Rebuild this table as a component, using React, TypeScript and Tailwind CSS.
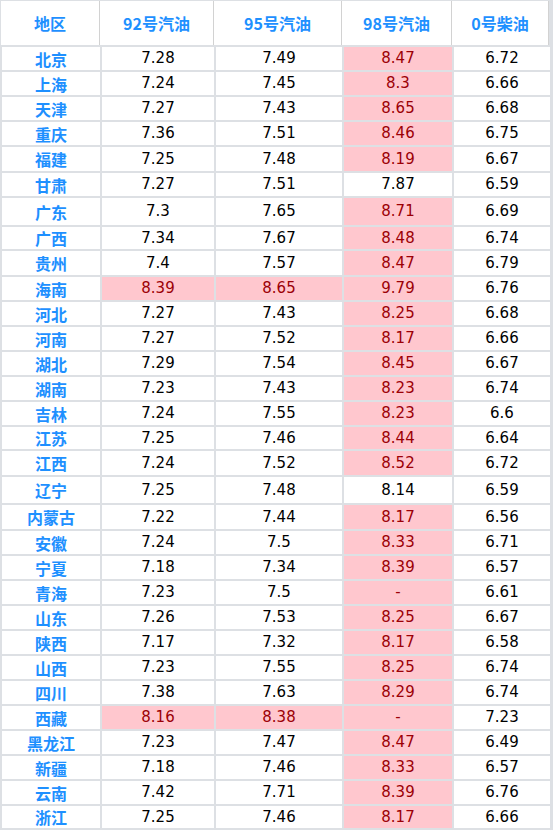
import React from "react";

type Row = [string, string, string, string, string, number[]];

const rows: Row[] = [
  ["北京", "7.28", "7.49", "8.47", "6.72", [2]],
  ["上海", "7.24", "7.45", "8.3", "6.66", [2]],
  ["天津", "7.27", "7.43", "8.65", "6.68", [2]],
  ["重庆", "7.36", "7.51", "8.46", "6.75", [2]],
  ["福建", "7.25", "7.48", "8.19", "6.67", [2]],
  ["甘肃", "7.27", "7.51", "7.87", "6.59", []],
  ["广东", "7.3", "7.65", "8.71", "6.69", [2]],
  ["广西", "7.34", "7.67", "8.48", "6.74", [2]],
  ["贵州", "7.4", "7.57", "8.47", "6.79", [2]],
  ["海南", "8.39", "8.65", "9.79", "6.76", [0, 1, 2]],
  ["河北", "7.27", "7.43", "8.25", "6.68", [2]],
  ["河南", "7.27", "7.52", "8.17", "6.66", [2]],
  ["湖北", "7.29", "7.54", "8.45", "6.67", [2]],
  ["湖南", "7.23", "7.43", "8.23", "6.74", [2]],
  ["吉林", "7.24", "7.55", "8.23", "6.6", [2]],
  ["江苏", "7.25", "7.46", "8.44", "6.64", [2]],
  ["江西", "7.24", "7.52", "8.52", "6.72", [2]],
  ["辽宁", "7.25", "7.48", "8.14", "6.59", []],
  ["内蒙古", "7.22", "7.44", "8.17", "6.56", [2]],
  ["安徽", "7.24", "7.5", "8.33", "6.71", [2]],
  ["宁夏", "7.18", "7.34", "8.39", "6.57", [2]],
  ["青海", "7.23", "7.5", "-", "6.61", [2]],
  ["山东", "7.26", "7.53", "8.25", "6.67", [2]],
  ["陕西", "7.17", "7.32", "8.17", "6.58", [2]],
  ["山西", "7.23", "7.55", "8.25", "6.74", [2]],
  ["四川", "7.38", "7.63", "8.29", "6.74", [2]],
  ["西藏", "8.16", "8.38", "-", "7.23", [0, 1, 2]],
  ["黑龙江", "7.23", "7.47", "8.47", "6.49", [2]],
  ["新疆", "7.18", "7.46", "8.33", "6.57", [2]],
  ["云南", "7.42", "7.71", "8.39", "6.76", [2]],
  ["浙江", "7.25", "7.46", "8.17", "6.66", [2]],
];

const cjk = "font-['Noto_Sans_CJK_SC',_'Noto_Sans',_sans-serif]";
const num = "font-['DejaVu_Sans',_'Verdana',_sans-serif]";

export default function App() {
  const headers = ["地区", "92号汽油", "95号汽油", "98号汽油", "0号柴油"];
  const hw = ["w-[99px]", "w-[114px]", "w-[128px]", "w-[110px]", "w-[97px]"];
  return (
    <div className="w-[553px] h-[830px] bg-[#dde0e4] overflow-hidden">
      <div className="flex pl-[1px] pt-[1px] h-[45px]">
        {headers.map((h, i) => (
          <div
            key={h}
            className={`${hw[i]} h-[44px] bg-white border-r border-[#d2d2d2] flex items-center justify-center text-[16px] font-bold text-[#1e90ff] ${cjk}`}
          >
            {h}
          </div>
        ))}
      </div>
      <div className="grid grid-cols-[98px_112px_126px_108px_96px] grid-rows-[23px_23px_23px_23px_24px_23px_27px_22px_24px_23px_23px_23px_23px_23px_23px_22px_24px_26px_24px_23px_23px_23px_23px_23px_23px_23px_23px_23px_23px_23px_22px] gap-[2px] pl-[2px] pr-[3px] pt-[2px] pb-[2px]">
        {rows.map((r) => (
          <React.Fragment key={r[0]}>
            <div
              className={`bg-white flex items-center justify-center text-[16px] font-bold text-[#1e90ff] leading-none ${cjk}`}
            >
              {r[0]}
            </div>
            {[r[1], r[2], r[3], r[4]].map((v, j) => {
              const pink = r[5].includes(j);
              return (
                <div
                  key={j}
                  className={`flex items-center justify-center text-[15px] leading-none ${num} ${
                    pink ? "bg-[#ffc7ce] text-[#9c0006]" : "bg-white text-black"
                  }`}
                >
                  {v}
                </div>
              );
            })}
          </React.Fragment>
        ))}
      </div>
    </div>
  );
}
